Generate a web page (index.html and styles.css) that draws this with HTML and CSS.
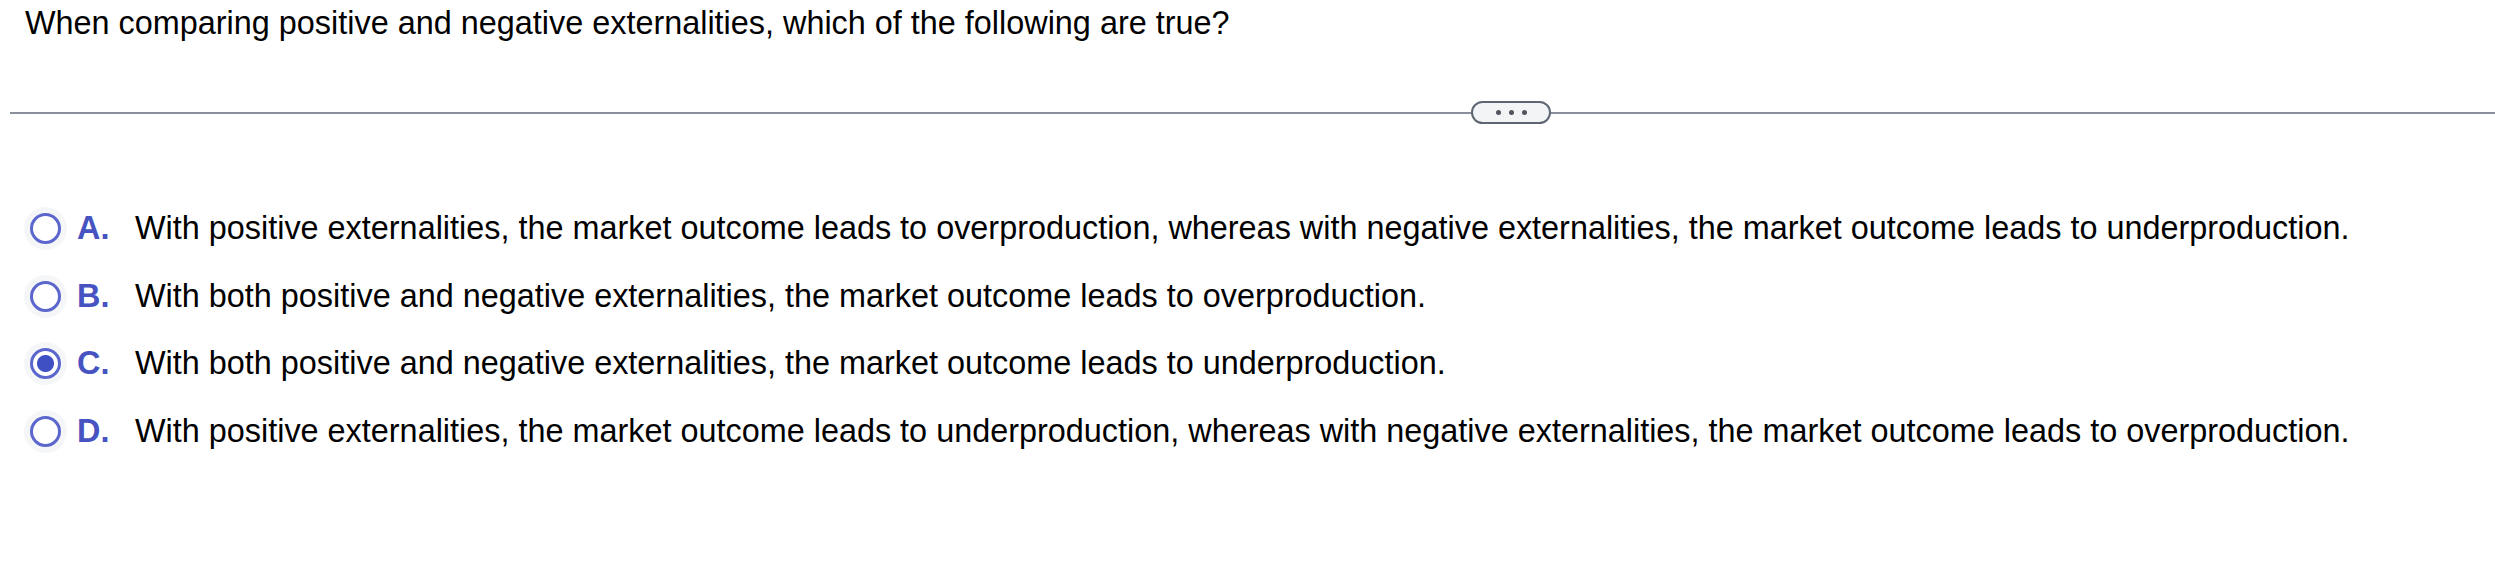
FILE: index.html
```html
<!DOCTYPE html>
<html lang="en">
<head>
    <meta charset="UTF-8">
    <title>Externalities question</title>
    <link rel="stylesheet" href="styles.css">
</head>
<body>
    <div class="question">When comparing positive and negative externalities, which of the following are true?</div>

    <div class="divider">
        <span class="rule rule-left"></span>
        <span class="more"><i></i><i></i><i></i></span>
        <span class="rule rule-right"></span>
    </div>

    <ul class="choices">
        <li class="choice">
            <span class="radio"></span>
            <span class="letter">A.</span>
            <span class="text">With positive externalities, the market outcome leads to overproduction, whereas with negative externalities, the market outcome leads to underproduction.</span>
        </li>
        <li class="choice">
            <span class="radio"></span>
            <span class="letter">B.</span>
            <span class="text">With both positive and negative externalities, the market outcome leads to overproduction.</span>
        </li>
        <li class="choice">
            <span class="radio checked"></span>
            <span class="letter">C.</span>
            <span class="text">With both positive and negative externalities, the market outcome leads to underproduction.</span>
        </li>
        <li class="choice">
            <span class="radio"></span>
            <span class="letter">D.</span>
            <span class="text">With positive externalities, the market outcome leads to underproduction, whereas with negative externalities, the market outcome leads to overproduction.</span>
        </li>
    </ul>
</body>
</html>
```

FILE: styles.css
```css
body {
    margin: 0;
    background-color: #ffffff;
    color: #000000;
    font-family: "Liberation Sans", Arial, sans-serif;
}

.question {
    font-size: 32.4px;
    line-height: 37px;
    padding: 5px 0 0 25px;
}

.divider {
    display: flex;
    align-items: center;
    margin-top: 59px;
    padding-left: 10px;
}

.rule {
    height: 2px;
    background-color: #8b8f9c;
}

.rule-left {
    width: 1461px;
}

.rule-right {
    flex: 1;
}

.more {
    display: flex;
    justify-content: center;
    align-items: center;
    gap: 8px;
    box-sizing: border-box;
    width: 80px;
    height: 23px;
    border: 2px solid #5f6673;
    border-radius: 12px;
    background-color: #f3f4f6;
}

.more i {
    width: 5px;
    height: 5px;
    border-radius: 50%;
    background-color: #505560;
}

.choices {
    list-style: none;
    margin: 71px 0 0;
    padding: 0 0 0 30px;
}

.choice {
    display: flex;
    align-items: center;
    height: 67.5px;
    font-size: 32.4px;
}

.radio {
    box-sizing: border-box;
    width: 31px;
    height: 31px;
    border: 3px solid #5b67cc;
    border-radius: 50%;
    background-color: #ffffff;
    box-shadow: 0 0 0 6px rgba(200, 204, 215, 0.18);
    flex-shrink: 0;
}

.radio.checked {
    background: radial-gradient(circle, #3f4fc4 0 8px, #ffffff 9px);
}

.letter {
    width: 58px;
    margin-left: 16px;
    font-weight: bold;
    color: #4653c1;
}
```
